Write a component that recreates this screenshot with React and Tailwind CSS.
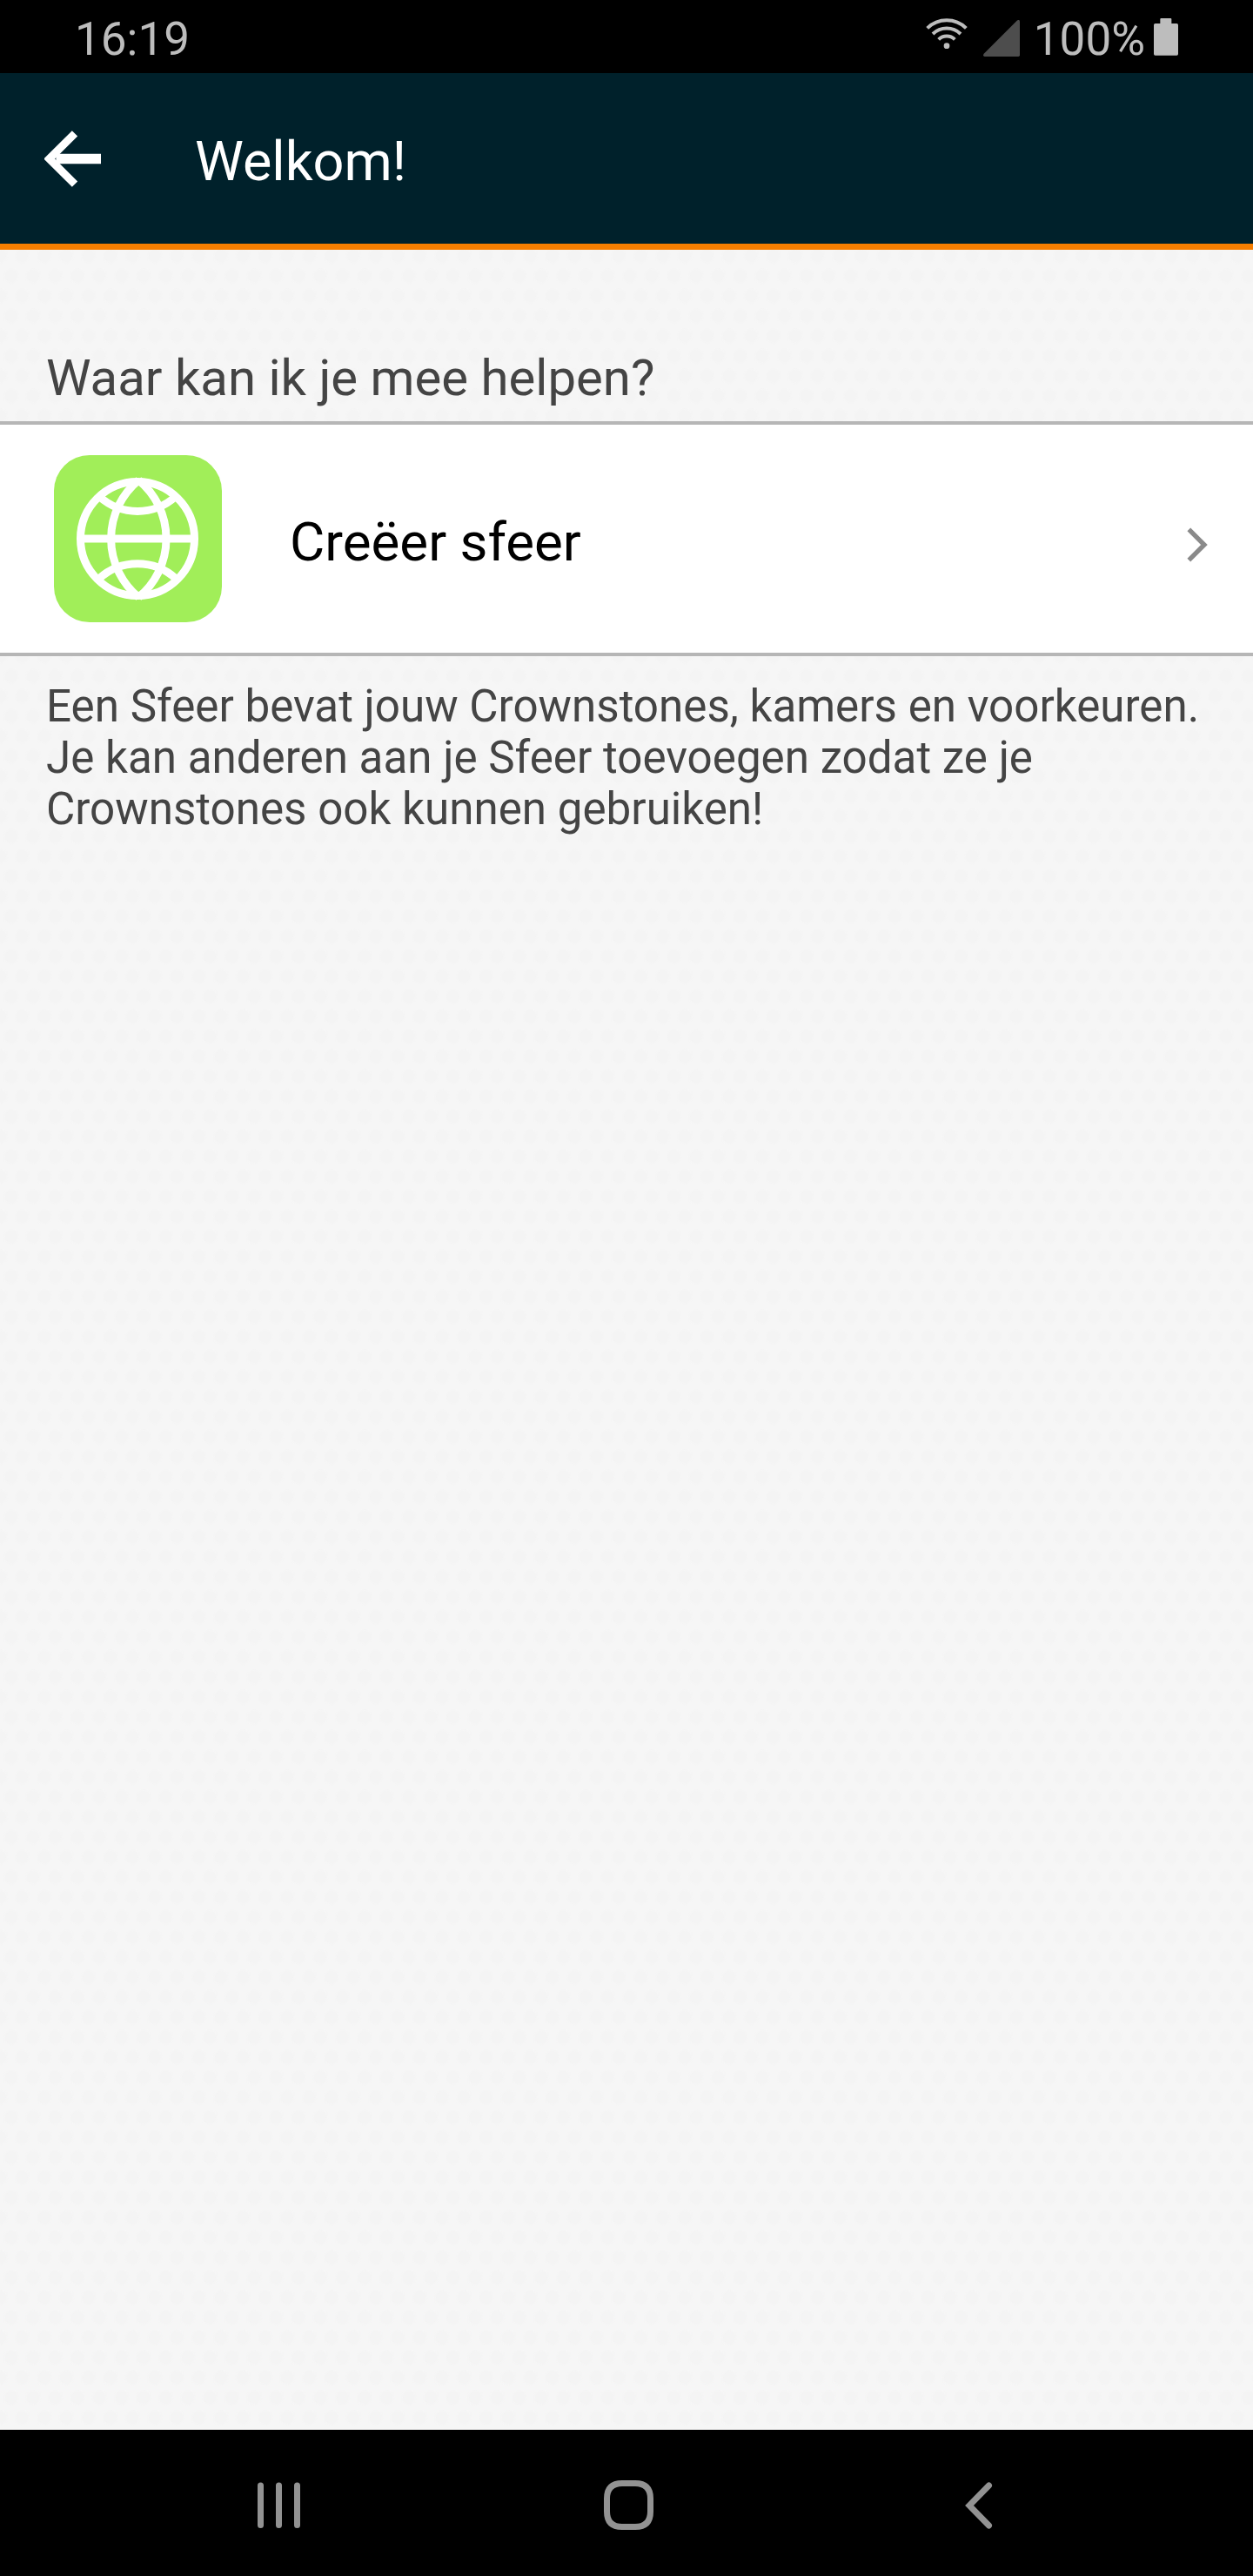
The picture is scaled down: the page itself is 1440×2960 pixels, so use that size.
import React from "react";

function StatusBar() {
  return (
    <div className="flex h-[84px] items-start bg-black pl-[86px] pr-[86px] text-[53px] leading-[78px] text-[#bdbdbd]">
      <span className="mt-[6px]">16:19</span>
      <div className="ml-auto flex items-start">
        <svg className="mt-[21px] h-[36px] w-[48px]" viewBox="0 0 144 108" fill="none" stroke="#bdbdbd" strokeWidth="12">
          <path d="M5 34 A96 96 0 0 1 139 34" />
          <path d="M24 54 A69 69 0 0 1 120 54" />
          <path d="M44 73 A40 40 0 0 1 100 73" />
          <circle cx="72" cy="95" r="10" fill="#bdbdbd" stroke="none" />
        </svg>
        <svg className="ml-[18px] mt-[23px] h-[42px] w-[42px]" viewBox="0 0 126 126">
          <path d="M116 2 Q126 -4 126 6 V121 Q126 126 121 126 H5 Q-3 124 2 116 Z" fill="#4d4d4d" />
        </svg>
        <span className="ml-[16px] mt-[6px]">100%</span>
        <svg className="ml-[10px] mt-[21px] h-[43px] w-[28px]" viewBox="0 0 84 129" fill="#bdbdbd">
          <path d="M25 0 H58 Q61 0 61 3 V18 H79 Q84 18 84 23 V123 Q84 128 79 128 H5 Q0 128 0 123 V23 Q0 18 5 18 H22 V3 Q22 0 25 0 Z" />
        </svg>
      </div>
    </div>
  );
}

function Header() {
  return (
    <header className="flex h-[203px] items-center border-b-[7px] border-[#f57e00] bg-[#00212b] pl-[51px]">
      <svg className="h-[65px] w-[65px]" viewBox="0 0 195 195" fill="none" stroke="#fff">
        <path d="M105 10 L17 97.500 L105 185" strokeWidth="27" strokeLinejoin="miter" />
        <path d="M40 97.500 H195" strokeWidth="34" />
      </svg>
      <h1 className="ml-[108px] mt-[7px] text-[63px] leading-[74px] text-white">Welkom!</h1>
    </header>
  );
}

function GlobeTile() {
  return (
    <svg className="h-[192px] w-[193px] rounded-[41px] bg-[#a1ee59]" viewBox="186 429 579 576" fill="none" stroke="#fff" strokeWidth="27">
      <circle cx="474" cy="717" r="196.500" />
      <path d="M277 717 H671" />
      <path d="M478 515 A262 262 0 0 0 478 919" />
      <path d="M478 515 A262 262 0 0 1 478 919" />
      <path d="M344 573 A196 196 0 0 0 604 573" />
      <path d="M341 855 A196 196 0 0 1 607 855" />
    </svg>
  );
}

function NavBar() {
  return (
    <nav className="flex h-[168px] items-center bg-black pl-[295px] pt-[5px]">
      <svg className="h-[54px] w-[51px]" viewBox="0 0 51 54" stroke="#929292" strokeWidth="7" strokeLinecap="round">
        <path d="M4.500 4 V49.500 M25.500 4 V49.500 M46.500 4 V49.500" />
      </svg>
      <svg className="ml-[348px] h-[57px] w-[57px]" viewBox="0 0 57 57" fill="none" stroke="#929292" strokeWidth="7">
        <path d="M21 3.500 H36 Q53.500 3.500 53.500 21 V36 Q53.500 53.500 36 53.500 H21 Q3.500 53.500 3.500 36 V21 Q3.500 3.500 21 3.500 Z" />
      </svg>
      <svg className="ml-[358px] h-[54px] w-[32px]" viewBox="0 0 32 54" fill="none" stroke="#929292" strokeWidth="7" strokeLinecap="round">
        <path d="M27.500 4 L5 27 L27.500 50" />
      </svg>
    </nav>
  );
}

export default function App() {
  return (
    <div className="flex h-[2960px] w-[1440px] flex-col overflow-hidden font-['Roboto',sans-serif]">
      <StatusBar />
      <Header />
      <main className="flex-1 bg-[#f6f6f6] bg-[radial-gradient(circle_at_center,#f4f4f4_0,#f4f4f4_6px,transparent_10px),radial-gradient(circle_at_center,#f4f4f4_0,#f4f4f4_6px,transparent_10px)] bg-size-[25.4px_46px] bg-position-[0px_7px,12.7px_30px]">
        <h2 className="pl-[53px] pt-[113px] text-[58.100px] leading-[68px] text-[#444]">
          Waar kan ik je mee helpen?
        </h2>
        <div className="mt-[16px] flex h-[270px] items-center border-y-4 border-[#b6b6b6] bg-white pl-[62px] pr-[52px]">
          <GlobeTile />
          <span className="ml-[78px] mt-[8px] text-[61.900px] leading-[74px] text-black">Creëer sfeer</span>
          <svg className="ml-auto mt-[13px] h-[40px] w-[24px]" viewBox="0 0 72 120" fill="none" stroke="#8a8a8a" strokeWidth="16">
            <path d="M7 7 L60 60 L7 113" />
          </svg>
        </div>
        <p className="mt-[28px] whitespace-nowrap pl-[53px] text-[51.150px] leading-[59px] text-[#444]">
          Een Sfeer bevat jouw Crownstones, kamers en voorkeuren.
          <br />
          Je kan anderen aan je Sfeer toevoegen zodat ze je
          <br />
          Crownstones ook kunnen gebruiken!
        </p>
      </main>
      <NavBar />
    </div>
  );
}
